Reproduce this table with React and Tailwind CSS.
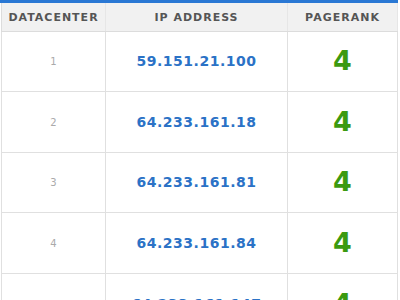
const rows = [
  { id: 1, ip: '59.151.21.100', pr: 4, h: 'h-[60px]' },
  { id: 2, ip: '64.233.161.18', pr: 4, h: 'h-[61px]' },
  { id: 3, ip: '64.233.161.81', pr: 4, h: 'h-[60px]' },
  { id: 4, ip: '64.233.161.84', pr: 4, h: 'h-[61px]' },
  { id: 5, ip: '64.233.161.147', pr: 4, h: 'h-[61px]' },
];

const App = () => {
  return (
    <div className="w-[400px] h-[300px] overflow-hidden bg-white font-['DejaVu_Sans',sans-serif]">
      {/* top bar */}
      <div className="h-[3px] w-[398px] bg-[#2a78d4]" />

      <div className="ml-[1px] w-[397px]">
        {/* header */}
        <div className="flex h-[29px] bg-[#f1f1f1] border-b border-[#dcdcdc] text-[11px] font-bold tracking-[1px] text-[#555]">
          <div className="w-[104px] flex items-center justify-center border-l border-[#dcdcdc] pt-[3px]">DATACENTER</div>
          <div className="w-[182px] flex items-center justify-center border-l border-[#e6e6e6] pt-[3px]">IP ADDRESS</div>
          <div className="w-[111px] flex items-center justify-center border-l border-r border-[#e6e6e6] pt-[3px]">PAGERANK</div>
        </div>

        {rows.map((r) => (
          <div key={r.id} className={`flex ${r.h} border-b border-[#e0e0e0]`}>
            <div className="w-[104px] flex items-center justify-center border-l border-[#e0e0e0] text-[10px] text-[#aaa]">
              {r.id}
            </div>
            <div className="w-[182px] flex items-center justify-center border-l border-[#e0e0e0] text-[14px] font-bold tracking-[0.5px] text-[#2b72c6]">
              {r.ip}
            </div>
            <div className="w-[111px] flex items-center justify-center border-l border-r border-[#e0e0e0] text-[27px] font-bold text-[#3b9a10]">
              {r.pr}
            </div>
          </div>
        ))}
      </div>
    </div>
  );
};

export default App;
